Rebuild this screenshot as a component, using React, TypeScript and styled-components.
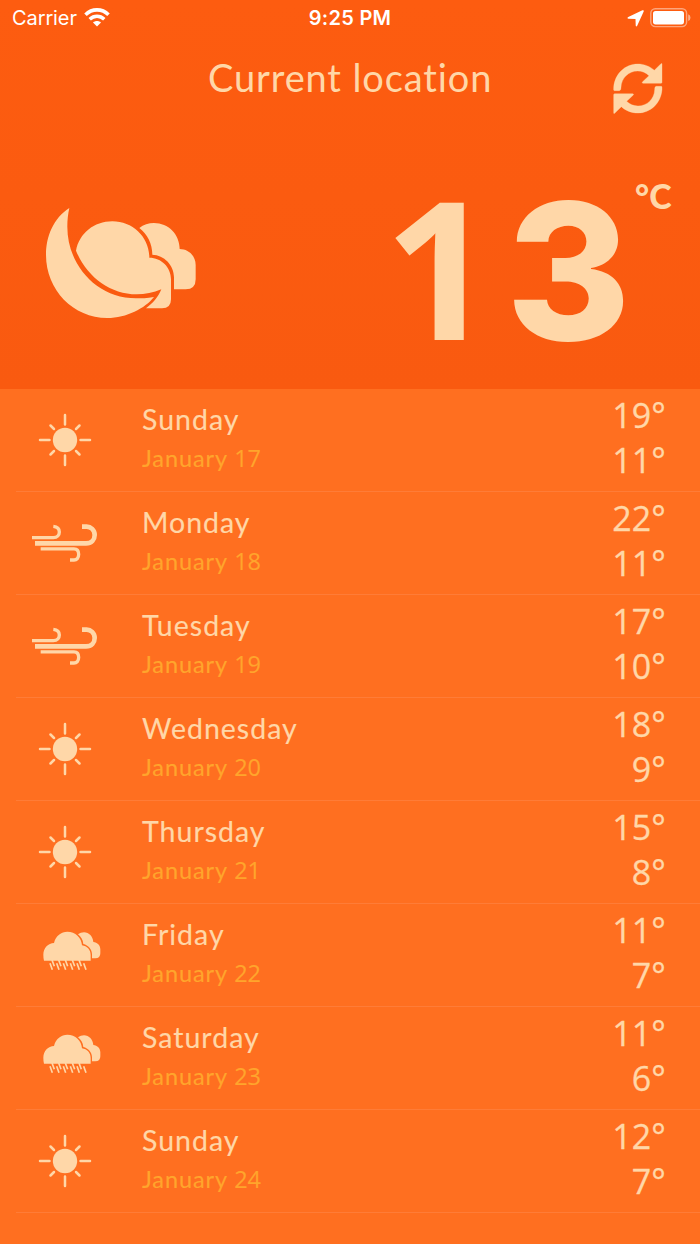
import React from "react";
import styled, { createGlobalStyle } from "styled-components";

const cream = "#ffd7a8";

const GlobalStyle = createGlobalStyle`
  * { box-sizing: border-box; }
  body { margin: 0; background: #ff6f20; }
`;

const Screen = styled.main`
  width: 700px;
  height: 1244px;
  overflow: hidden;
  background: #ff6f20;
  color: ${cream};
  font-family: Lato, "Open Sans", sans-serif;
`;

const Header = styled.header`
  height: 389px;
  background: linear-gradient(#fd5c10, #f95a10);
  display: flex;
  flex-direction: column;
`;

const StatusBar = styled.div`
  height: 36px;
  padding: 0 9px 0 12px;
  display: grid;
  grid-template-columns: 1fr auto 1fr;
  align-items: center;
  color: #fff;
  font: 400 20px/36px Inter, "Liberation Sans", sans-serif;
`;

const StatusGroup = styled.div<{ $end?: boolean }>`
  display: flex;
  align-items: center;
  gap: ${(p) => (p.$end ? 6 : 7)}px;
  letter-spacing: -0.1px;
  justify-content: ${(p) => (p.$end ? "flex-end" : "flex-start")};
`;

const Clock = styled.time`
  font-weight: 600;
  letter-spacing: 0.3px;
  padding-right: 3px;
`;

const TitleBar = styled.div`
  height: 84px;
  padding: 0 37px 0 87px;
  display: grid;
  grid-template-columns: 1fr 50px;
  align-items: start;
`;

const Title = styled.h1`
  margin: 0;
  padding: 17px 0 0 121px;
  font-size: 38px;
  line-height: 48px;
  font-weight: 400;
  letter-spacing: 0.87px;
  white-space: nowrap;
`;

const RefreshButton = styled.button`
  margin: 27px 0 0;
  padding: 0;
  border: 0;
  background: none;
  width: 50px;
  height: 51px;
  svg { display: block; }
`;

const Current = styled.section`
  flex: 1;
  display: flex;
  justify-content: space-between;
  padding: 0 27px 0 46px;
`;

const CurrentIcon = styled.div`
  padding-top: 88px;
  svg { display: block; }
`;

const Reading = styled.div`
  display: flex;
`;

const Digits = styled.div`
  width: 251px;
  padding-top: 20px;
  display: flex;
  align-items: baseline;
  line-height: 263px;
`;

const Tens = styled.span`
  width: 122px;
  font-family: "Open Sans", sans-serif;
  font-weight: 740;
  font-size: 193px;
`;

const Ones = styled.span`
  font-family: Inter, sans-serif;
  font-weight: 800;
  font-size: 190px;
`;

const Unit = styled.span`
  width: 38px;
  padding-top: 62px;
  font: 900 34px/40px Lato, sans-serif;
  white-space: nowrap;
`;

const Forecast = styled.ul`
  margin: 0;
  padding: 0;
  list-style: none;
`;

const Day = styled.li`
  height: 103px;
  margin-left: 16px;
  padding-right: 34px;
  display: grid;
  grid-template-columns: 126px 1fr auto;
  border-bottom: 1px solid #ff7c37;
`;

const IconCell = styled.div`
  height: 102px;
  width: 97px;
  display: flex;
  align-items: center;
  justify-content: center;
`;

const Labels = styled.div`
  padding-top: 12px;
  display: flex;
  flex-direction: column;
  white-space: nowrap;
`;

const DayName = styled.span`
  font-size: 28.5px;
  line-height: 36px;
  letter-spacing: 1px;
  -webkit-text-stroke: 0.15px ${cream};
`;

const DateText = styled.span`
  margin-top: 5px;
  font-size: 23.5px;
  line-height: 32px;
  letter-spacing: 0.9px;
  color: #ffa52c;
  -webkit-text-stroke: 0.15px #ffa52c;
`;

const DateNumber = styled.span`
  font-family: "Open Sans", sans-serif;
  letter-spacing: -0.3px;
`;

const Temps = styled.div`
  padding-top: 4px;
  font: 400 34px/45.4px "Open Sans", sans-serif;
  text-align: right;
  letter-spacing: 0.1px;
  -webkit-text-stroke: 0.3px ${cream};
`;

const Temp = styled.div``;

const Sun = () => (
  <svg width="54" height="54" viewBox="-27 -27 54 54">
    <circle r="12.2" fill={cream} />
    <g stroke={cream} strokeWidth="2.5" strokeLinecap="round">
      <path d="M0-25V-15.5M0 25V15.5M-25 0H-15.5M25 0H15.5" />
      <path d="M-14.5-14.5L-11-11M14.5-14.5L11-11M-14.5 14.5L-11 11M14.5 14.5L11 11" />
    </g>
  </svg>
);

const Wind = () => (
  <svg width="65" height="38" viewBox="96 416 195 114" fill="none" stroke={cream}>
    <path strokeWidth="10" d="M96 457H160C172 457 178 449 178 440C178 430 171 424 160 423" />
    <path strokeWidth="14" d="M105 474H258C275 474 284 462 284 449C284 433 272 424 260 424H246" />
    <path strokeWidth="10" d="M122 490.500H222C232 490.500 236 498 236 507C236 518 230 524 222 524H210" />
  </svg>
);

const RainSvg = styled.svg`
  margin: 0 0 9px 15px;
`;

const Rain = () => (
  <RainSvg width="58" height="40" viewBox="130 91 174 120" fill={cream}>
    <path d="M133 180Q131 172 131 162C131 142 146 127 163 127C168 105 185 93 203 93C227 93 246 111 247 134C262 136 273 147 273 163V180Z" />
    <path d="M235 101C240 97 247 95 253 95C268 95 280 108 281 124C293 125 302 134 302 146V158Q302 173 287 173H277V161C277 146 266 134 251 130C250 118 244 108 235 101Z" />
    <path
      fill="none"
      stroke={cream}
      strokeWidth="5"
      d="M151 188l7 19M171 188l7 19M191 188l7 19M212 188l7 19M232 188l7 19M252 188l7 19M157 178l7 19M177 178l7 19M197 178l7 19M218 178l7 19M238 178l7 19"
    />
  </RainSvg>
);

const MoonSvg = styled.svg`
  margin-top: 6px;
`;

const MoonCloud = () => (
  <MoonSvg width="150" height="110" viewBox="48 54 450 330" fill={cream}>
    <path d="M118 54C70 85 48 140 48 195C48 300 130 384 232 384C290 384 345 355 372 321C350 325 335 325 318 325C200 325 112 225 112 110C112 90 114 72 118 54Z" />
    <path d="M138 182C148 130 192 94 247 94C309 94 358 142 358 203C394 203 423 232 423 268V328Q423 355 396 355H348C368 340 384 322 394 298C370 308 345 313 320 313C240 313 170 260 138 182Z" />
    <path d="M328 114C340 104 356 99 372 99C415 99 449 133 449 177C476 177 497 198 497 225V268Q497 298 467 298H432V262C432 225 402 195 367 194C367 162 352 132 328 114Z" />
  </MoonSvg>
);

const Refresh = () => {
  const half =
    "M43 122C40 122 41 116 41 112C44 72 75 42 113 42C132 42 150 49 163 61L183 41Q186 39 186 42V97Q186 100 183 100H129Q125 99 127 96L147 77C138 68 126 63 113 63C86 63 64 84 63 112Q63 122 58 122Z";
  return (
    <svg width="50" height="51" viewBox="39 39 150 153" fill={cream} stroke={cream} strokeWidth="1">
      <path d={half} />
      <path d={half} transform="rotate(180 113.500 115.500)" />
    </svg>
  );
};

const Wifi = () => (
  <svg width="26" height="20" viewBox="0 0 26 20" fill="none" stroke="#fff">
    <path strokeWidth="3.600" d="M1.500 6.700C8 .3 18 .3 24.500 6.700" />
    <path strokeWidth="3.500" d="M5.700 11.200C10 7.200 16 7.200 20.300 11.200" />
    <path fill="#fff" stroke="none" d="M13 18.500L9 14.500C11.200 12.500 14.800 12.500 17 14.500Z" />
  </svg>
);

const LocationArrow = () => (
  <svg width="17" height="17" viewBox="0 0 16 16" fill="#fff">
    <path d="M15.700 1.300L9.600 14.800Q8.600 16.400 8.200 14.500L8 8.400L1.400 8.200Q-.4 7.700 1.200 6.700L14.500.3Q16.200-.1 15.700 1.300Z" />
  </svg>
);

const Battery = () => (
  <svg width="41" height="20" viewBox="0 0 41 20">
    <rect x=".8" y=".8" width="35.800" height="17.800" rx="4.500" fill="none" stroke="#fff" strokeOpacity=".45" strokeWidth="1.400" />
    <rect x="3" y="3" width="31" height="13.400" rx="2.600" fill="#fff" />
    <path d="M38.200 6.300Q40.500 7.300 40.500 9.700T38.200 13Z" fill="#fff" fillOpacity=".5" />
  </svg>
);

const icons = { sun: Sun, wind: Wind, rain: Rain };

type Entry = { day: string; date: number; icon: keyof typeof icons; high: number; low: number };

const forecast: Entry[] = [
  { day: "Sunday", date: 17, icon: "sun", high: 19, low: 11 },
  { day: "Monday", date: 18, icon: "wind", high: 22, low: 11 },
  { day: "Tuesday", date: 19, icon: "wind", high: 17, low: 10 },
  { day: "Wednesday", date: 20, icon: "sun", high: 18, low: 9 },
  { day: "Thursday", date: 21, icon: "sun", high: 15, low: 8 },
  { day: "Friday", date: 22, icon: "rain", high: 11, low: 7 },
  { day: "Saturday", date: 23, icon: "rain", high: 11, low: 6 },
  { day: "Sunday", date: 24, icon: "sun", high: 12, low: 7 },
];

export default function App() {
  return (
    <Screen>
      <GlobalStyle />
      <Header>
        <StatusBar>
          <StatusGroup>
            Carrier
            <Wifi />
          </StatusGroup>
          <Clock>9:25 PM</Clock>
          <StatusGroup $end>
            <LocationArrow />
            <Battery />
          </StatusGroup>
        </StatusBar>
        <TitleBar>
          <Title>Current location</Title>
          <RefreshButton aria-label="Refresh">
            <Refresh />
          </RefreshButton>
        </TitleBar>
        <Current>
          <CurrentIcon>
            <MoonCloud />
          </CurrentIcon>
          <Reading>
            <Digits>
              <Tens>1</Tens>
              <Ones>3</Ones>
            </Digits>
            <Unit>°C</Unit>
          </Reading>
        </Current>
      </Header>
      <Forecast>
        {forecast.map((f) => {
          const Icon = icons[f.icon];
          return (
            <Day key={f.date}>
              <IconCell>
                <Icon />
              </IconCell>
              <Labels>
                <DayName>{f.day}</DayName>
                <DateText>
                  January <DateNumber>{f.date}</DateNumber>
                </DateText>
              </Labels>
              <Temps>
                <Temp>{f.high}°</Temp>
                <Temp>{f.low}°</Temp>
              </Temps>
            </Day>
          );
        })}
      </Forecast>
    </Screen>
  );
}
